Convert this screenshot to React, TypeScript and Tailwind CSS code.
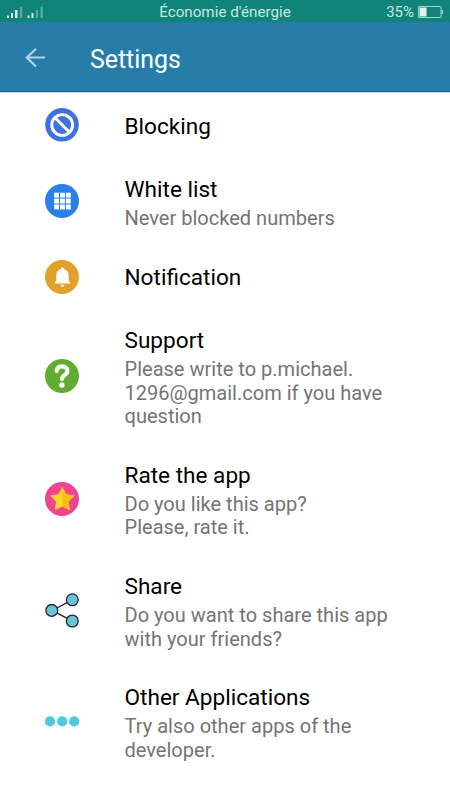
import type { ReactNode } from "react";

interface SettingItem {
  title: string;
  lines: string[];
  icon: ReactNode;
}

function BlockIcon() {
  return (
    <svg className="size-[34px] overflow-visible" viewBox="0 0 34 34" fill="none">
      <circle cx="17" cy="16.8" r="16.8" fill="#3e72de" />
      <circle cx="17.2" cy="17" r="10.4" stroke="#fff" strokeWidth="2.9" />
      <path d="M10.2 10L24.2 24" stroke="#fff" strokeWidth="2.9" />
    </svg>
  );
}

function GridIcon() {
  const offsets = [9.1, 15, 20.9];
  return (
    <svg className="size-[34px]" viewBox="0 0 34 34">
      <circle cx="17" cy="17" r="17" fill="#2a80e8" />
      {offsets.map((y) =>
        offsets.map((x) => (
          <rect key={`${x}-${y}`} x={x} y={y - 0.4} width="4.9" height="4.9" fill="#fff" />
        ))
      )}
    </svg>
  );
}

function BellIcon() {
  return (
    <svg className="size-[34px]" viewBox="0 0 34 34">
      <circle cx="17" cy="17" r="17" fill="#e2a128" />
      <path
        d="M17.4 7.6c1 0 1.6.6 1.6 1.6 3 .7 4.7 3 4.7 6v4.2c0 1.2.4 1.8 1.3 2.6v1.6H10v-1.6c.9-.8 1.3-1.4 1.3-2.6v-4.2c0-3 1.5-5.3 4.5-6 0-1 .6-1.6 1.6-1.6z"
        fill="#fff"
      />
      <path d="M15.3 24.8h4.2c-.2 1.2-1 1.9-2.1 1.9s-1.9-.7-2.1-1.9z" fill="#fff" />
    </svg>
  );
}

function HelpIcon() {
  return (
    <svg className="size-[34px]" viewBox="0 0 34 34" fill="none">
      <circle cx="17" cy="17" r="17" fill="#60ad31" />
      <path
        d="M11.6 12c.4-3 2.4-4.6 5.4-4.6 3.3 0 5.5 1.8 5.5 4.7 0 4-5.6 4-5.6 7.8"
        stroke="#fff"
        strokeWidth="4.1"
        strokeLinecap="round"
      />
      <circle cx="16.9" cy="26" r="2.7" fill="#fff" />
    </svg>
  );
}

function StarIcon() {
  return (
    <svg className="size-[34px]" viewBox="0 0 34 34">
      <circle cx="17" cy="17" r="17" fill="#f04490" />
      <path
        d="M17.3 4.8l3.8 7.5 8.3 1.3-5.8 6.1 1.2 8.5-7.5-3.8-7.5 3.8 1.2-8.5-5.8-6.1 8.3-1.3z"
        fill="#ffd72d"
      />
      <path d="M17.3 4.8l3.8 7.5 8.3 1.3-5.8 6.1 1.2 8.5-7.5-3.8z" fill="#fdbe12" />
    </svg>
  );
}

function ShareIcon() {
  return (
    <svg className="size-[34px] overflow-visible" viewBox="0 0 34 34" stroke="#20282c" strokeWidth="1.3">
      <path d="M27.5 6.8L7 17.4l20.5 10.7" fill="none" />
      <circle cx="27.3" cy="6.8" r="5.9" fill="#6bc3d6" />
      <circle cx="6.8" cy="17.4" r="5.9" fill="#6bc3d6" />
      <circle cx="27.3" cy="28" r="5.9" fill="#6bc3d6" />
    </svg>
  );
}

function DotsIcon() {
  return (
    <svg className="size-[34px]" viewBox="0 0 34 34" fill="#4dcbdc">
      <circle cx="5" cy="17.4" r="5.1" />
      <circle cx="17.2" cy="17.4" r="5.1" />
      <circle cx="29.2" cy="17.4" r="5.1" />
    </svg>
  );
}

const items: SettingItem[] = [
  { title: "Blocking", lines: [], icon: <BlockIcon /> },
  { title: "White list", lines: ["Never blocked numbers"], icon: <GridIcon /> },
  { title: "Notification", lines: [], icon: <BellIcon /> },
  {
    title: "Support",
    lines: ["Please write to p.michael.", "1296@gmail.com if you have", "question"],
    icon: <HelpIcon />,
  },
  { title: "Rate the app", lines: ["Do you like this app?", "Please, rate it."], icon: <StarIcon /> },
  { title: "Share", lines: ["Do you want to share this app", "with your friends?"], icon: <ShareIcon /> },
  {
    title: "Other Applications",
    lines: ["Try also other apps of the", "developer."],
    icon: <DotsIcon />,
  },
];

function StatusBar() {
  return (
    <div className="grid h-[22px] grid-cols-[1fr_auto_1fr] items-center bg-[#108479] pr-[7px] pl-[7px] text-[15.2px] text-[#cbe5e2]">
      <svg className="h-[22px] w-[38px]" viewBox="0 0 38 22" fill="#d5eae7">
        <rect x="0" y="14.5" width="2" height="2.5" />
        <rect x="4" y="12" width="2" height="5" />
        <rect x="8" y="9" width="2.5" height="8" />
        <rect x="13" y="5.5" width="2.2" height="11.5" opacity="0.4" />
        <rect x="20.5" y="14.5" width="2" height="2.5" />
        <rect x="24.5" y="12" width="2" height="5" />
        <rect x="29" y="9" width="2" height="8" opacity="0.4" />
        <rect x="33.5" y="5.5" width="2.2" height="11.5" opacity="0.4" />
      </svg>
      <span className="pt-px">Économie d'énergie</span>
      <div className="flex items-center justify-end gap-1">
        <span className="text-[15px]">35%</span>
        <svg className="h-3 w-[25px]" viewBox="0 0 25 12" fill="none">
          <rect x="0.5" y="0.5" width="22.5" height="11" rx="0.5" stroke="#a4d0cb" />
          <rect x="1.5" y="1.5" width="7" height="9" fill="#e5f2f1" />
          <rect x="23.5" y="4" width="1.3" height="4" fill="#cbe5e2" />
        </svg>
      </div>
    </div>
  );
}

function Header() {
  return (
    <header className="flex h-[70px] items-center border-b border-[#0f6a9a] bg-[#267da8] pl-[25px]">
      <svg className="mt-[3px] size-5" viewBox="0 0 20 20" fill="none" stroke="#b5d4e3" strokeWidth="2.2">
        <path d="M20 9.5H1.8M11 0.8L1.8 9.5l9.2 9" />
      </svg>
      <h1 className="ml-[45px] pt-[6px] text-[24.9px] leading-8 text-white">Settings</h1>
    </header>
  );
}

function SettingRow({ title, lines, icon }: SettingItem) {
  return (
    <li className="flex items-center pl-[45px]">
      <div className="w-[79.5px] shrink-0">{icon}</div>
      <div className={lines.length > 0 ? "pt-[18.5px] pb-[14.5px]" : "pt-[19.5px] pb-[17.5px]"}>
        <h2 className="text-[22.6px] leading-[27px] text-black">{title}</h2>
        {lines.length > 0 && (
          <div className="mt-1">
            {lines.map((line) => (
              <p key={line} className="text-[20.05px] leading-[23.6px] whitespace-nowrap text-[#747474]">
                {line}
              </p>
            ))}
          </div>
        )}
      </div>
    </li>
  );
}

export default function App() {
  return (
    <div className="h-[800px] w-[450px] overflow-hidden bg-white font-[Roboto,sans-serif]">
      <StatusBar />
      <Header />
      <ul className="border-t border-[#c4dae6]">
        {items.map((item) => (
          <SettingRow key={item.title} {...item} />
        ))}
      </ul>
    </div>
  );
}
